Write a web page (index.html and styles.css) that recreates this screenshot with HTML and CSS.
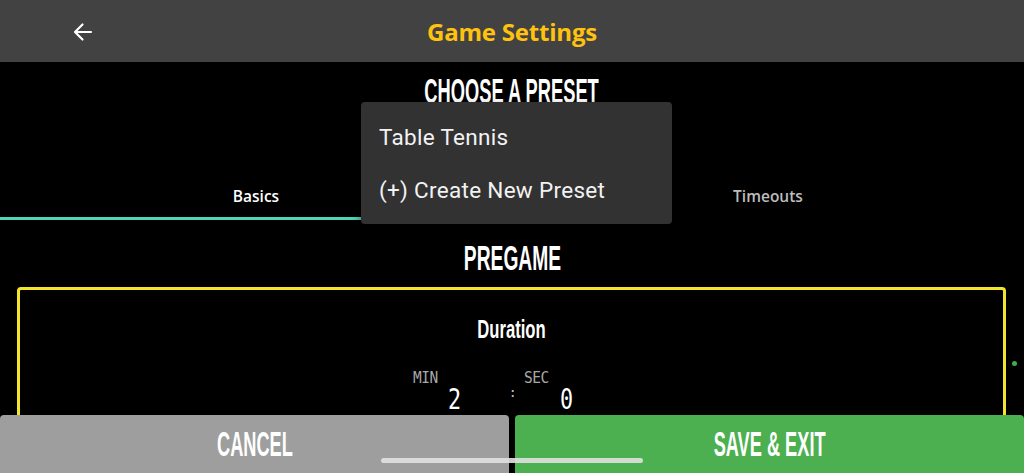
FILE: index.html
```html
<!DOCTYPE html>
<html lang="en">
<head>
<meta charset="utf-8">
<title>Game Settings</title>
<link rel="stylesheet" href="styles.css">
</head>
<body>
<div class="app">
  <header class="topbar">
    <button class="back" aria-label="Back">
      <svg width="24" height="24" viewBox="0 0 24 24"><path d="M20 12H4.5M11.5 4.5L4 12l7.5 7.5" fill="none" stroke="#fff" stroke-width="2.2" stroke-linecap="round" stroke-linejoin="round"/></svg>
    </button>
    <h1 class="title">Game Settings</h1>
  </header>

  <main class="content">
    <section class="preset">
      <h2 class="cond heading"><span>CHOOSE A PRESET</span></h2>
    </section>

    <nav class="tabs">
      <div class="tab active">Basics</div>
      <div class="tab">Timeouts</div>
    </nav>

    <h2 class="cond heading section-title"><span>PREGAME</span></h2>

    <div class="card">
      <div class="cond card-title"><span>Duration</span></div>
      <div class="timer">
        <div class="tcol tmin">
          <div class="tlabel">MIN</div>
          <div class="tdigit">2</div>
        </div>
        <div class="tcolon">:</div>
        <div class="tcol tsec">
          <div class="tlabel">SEC</div>
          <div class="tdigit">0</div>
        </div>
      </div>
    </div>
  </main>

  <div class="menu">
    <div class="menu-item">Table Tennis</div>
    <div class="menu-item">(+) Create New Preset</div>
  </div>

  <span class="scroll-dot"></span>

  <footer class="actions">
    <button class="btn cancel"><span class="cond btn-text">CANCEL</span></button>
    <button class="btn save"><span class="cond btn-text">SAVE &amp; EXIT</span></button>
  </footer>
  <span class="home-indicator"></span>
</div>
</body>
</html>
```
FILE: styles.css
```css
* { box-sizing: border-box; }
html, body {
  margin: 0;
  padding: 0;
  background: #000;
  width: 1024px;
  height: 473px;
  overflow: hidden;
}
.app {
  position: relative;
  width: 1024px;
  height: 473px;
  overflow: hidden;
  font-family: "Open Sans", "Liberation Sans", sans-serif;
  color: #fff;
}
.topbar {
  height: 62px;
  background: #424242;
  display: flex;
  align-items: center;
  justify-content: center;
  position: relative;
}
.back {
  position: absolute;
  left: 70px;
  top: 19px;
  width: 26px;
  height: 26px;
  padding: 0;
  border: 0;
  background: none;
  display: flex;
  align-items: center;
  justify-content: center;
}
.title {
  margin: 0;
  font-size: 24px;
  font-weight: 700;
  color: #ffc20e;
  letter-spacing: -0.2px;
}
.cond {
  font-family: "Liberation Sans", Arial, sans-serif;
  font-weight: 700;
  text-align: center;
}
.cond span, .btn-text {
  display: inline-block;
  transform: scaleX(0.53);
}
.heading {
  margin: 0;
  font-size: 34.5px;
  line-height: 40px;
  color: #fff;
}
.preset {
  height: 110px;
  padding-top: 9px;
}
.tabs {
  display: flex;
  height: 48px;
}
.tab {
  flex: 1;
  display: flex;
  align-items: center;
  justify-content: center;
  font-size: 15.5px;
  font-weight: 600;
  color: #bdbdbd;
  border-bottom: 3px solid transparent;
  padding-top: 2px;
}
.tab.active {
  color: #fff;
  border-bottom-color: #50d4b6;
}
.section-title {
  margin-top: 18px;
  font-size: 35px;
}
.section-title span { transform: scaleX(0.55); }
.card {
  margin: 9px 18px 0 17px;
  height: 200px;
  border: 3px solid #f3e52b;
  border-radius: 4px;
  padding-top: 22px;
}
.card-title {
  font-size: 26px;
  line-height: 34px;
}
.card-title span { transform: scaleX(0.64); }
.timer {
  display: grid;
  grid-template-columns: 1fr 6px 1fr;
  margin-top: 24px;
}
.tcol {
  display: flex;
  flex-direction: column;
  width: 48px;
}
.tmin { justify-self: end; margin-right: 48px; }
.tsec { justify-self: start; margin-left: 9px; width: 49px; }
.tlabel {
  font-family: "DejaVu Sans Mono", monospace;
  font-size: 16.5px;
  line-height: 16px;
  color: #a8a8a8;
  transform: scaleX(0.88);
  transform-origin: left center;
  letter-spacing: -0.5px;
}
.tdigit {
  font-family: "DejaVu Sans Mono", monospace;
  font-size: 29px;
  line-height: 26px;
  text-align: right;
  color: #fff;
  transform: scaleX(0.75);
  transform-origin: right center;
}
.tcolon {
  font-family: "DejaVu Sans Mono", monospace;
  font-size: 14px;
  color: #bbb;
  text-align: center;
  padding-top: 14px;
}
.menu {
  position: absolute;
  left: 361px;
  top: 102px;
  width: 311px;
  padding: 8px 0;
  background: #323232;
  border-radius: 4px;
  box-shadow: 0 4px 10px rgba(0,0,0,0.5);
}
.menu-item {
  height: 53px;
  display: flex;
  align-items: center;
  padding-left: 18px;
  font-family: Roboto, "Noto Sans", sans-serif;
  font-size: 22.5px;
  letter-spacing: 0.3px;
  color: #f2f2f2;
}
.scroll-dot {
  position: absolute;
  left: 1012px;
  top: 361px;
  width: 5px;
  height: 5px;
  border-radius: 50%;
  background: #3fae4a;
}
.actions {
  position: absolute;
  left: 0;
  right: 0;
  bottom: 0;
  height: 58px;
  display: flex;
  gap: 6px;
}
.btn {
  flex: 1;
  border: 0;
  padding: 0;
  border-radius: 4px 4px 0 0;
  display: flex;
  align-items: center;
  justify-content: center;
  color: #fff;
  font-size: 35px;
}
.btn-text { transform: scaleX(0.52); }
.cancel { background: #9e9e9e; }
.save { background: #4caf50; }
.home-indicator {
  position: absolute;
  left: 381px;
  top: 458px;
  width: 262px;
  height: 5px;
  border-radius: 3px;
  background: rgba(225,225,225,0.9);
}
```
